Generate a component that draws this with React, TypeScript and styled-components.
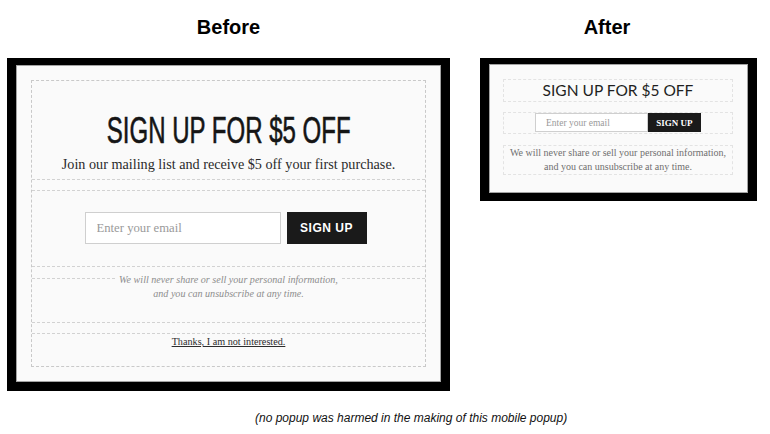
import React from "react";
import styled, { createGlobalStyle } from "styled-components";

const GlobalStyle = createGlobalStyle`
  html, body { margin: 0; padding: 0; background: #ffffff; }
  body { width: 770px; height: 434px; overflow: hidden; }
  * { box-sizing: border-box; }
`;

const Page = styled.div`
  padding: 15px 0 0 7px;
  font-family: "Liberation Sans", Arial, sans-serif;
`;

const Row = styled.div`
  display: flex;
  align-items: flex-start;
`;

const Column = styled.div<{ $width: number; $gap?: number }>`
  width: ${(p) => p.$width}px;
  margin-left: ${(p) => p.$gap ?? 0}px;
  display: flex;
  flex-direction: column;
`;

const Heading = styled.h2<{ $shift?: number }>`
  margin: 0 0 19px;
  padding-right: ${(p) => p.$shift ?? 0}px;
  font: 700 20px/24px "Liberation Sans", Arial, sans-serif;
  color: #000;
  text-align: center;
`;

const Frame = styled.div<{ $top: number; $bottom: number }>`
  background: #000;
  padding: ${(p) => p.$top}px 9px ${(p) => p.$bottom}px;
`;

const Panel = styled.div<{ $pad: string }>`
  background: #fafafa;
  border: 1px solid #a3a3a3;
  padding: ${(p) => p.$pad};
`;

/* ---------- Before ---------- */

const DashedBox = styled.div`
  border: 1px dashed #c9c9c9;
  display: flex;
  flex-direction: column;
`;

const Section = styled.div<{ $pad: string; $top?: boolean; $bottom?: boolean; $gap?: number }>`
  padding: ${(p) => p.$pad};
  margin-top: ${(p) => p.$gap ?? 0}px;
  border-top: ${(p) => (p.$top ? "1px dashed #d2d2d2" : "none")};
  border-bottom: ${(p) => (p.$bottom ? "1px dashed #d2d2d2" : "none")};
  text-align: center;
  font-size: 10px;
  line-height: 14px;
`;

const BigTitle = styled.h1`
  margin: 0;
  font: 400 36px/36px "Liberation Sans", Arial, sans-serif;
  color: #151515;
  white-space: nowrap;
  span {
    display: inline-block;
    transform: scaleX(0.667);
    transform-origin: center;
    -webkit-text-stroke: 0.6px #151515;
  }
`;

const Subtitle = styled.p`
  margin: 6px 0 0;
  font: 400 14.2px/18px "Liberation Serif", "Times New Roman", serif;
  color: #2a2a2a;
  white-space: nowrap;
`;

const FormRow = styled.div<{ $h: number; $gap: number }>`
  display: flex;
  justify-content: center;
  gap: ${(p) => p.$gap}px;
  height: ${(p) => p.$h}px;
`;

const EmailInput = styled.input<{ $w: number; $fs: number; $pl: number }>`
  width: ${(p) => p.$w}px;
  height: 100%;
  margin: 0;
  border: 1px solid #cfcfcf;
  background: #fff;
  padding: 0 0 0 ${(p) => p.$pl}px;
  font: 400 ${(p) => p.$fs}px "Liberation Serif", "Times New Roman", serif;
  color: #333;
  outline: none;
  &::placeholder { color: #9a9a9a; }
`;

const SignButton = styled.button<{ $w: number; $serif?: boolean }>`
  width: ${(p) => p.$w}px;
  height: 100%;
  margin: 0;
  border: none;
  background: #1a1a1a;
  color: #fff;
  padding: 0;
  cursor: pointer;
  font: ${(p) =>
    p.$serif
      ? `700 9px "Liberation Serif", "Times New Roman", serif`
      : `700 12px "Liberation Sans", Arial, sans-serif`};
  letter-spacing: ${(p) => (p.$serif ? "0" : "0.5px")};
`;

const Disclaimer = styled.p`
  display: block;
  width: fit-content;
  margin: -6px auto 0;
  padding: 0 2px;
  background: #fafafa;
  font: italic 400 10.1px/14px "Liberation Serif", "Times New Roman", serif;
  color: #8d8d8d;
  white-space: nowrap;
`;

const NoThanks = styled.a`
  font: 400 10.2px/14px "Liberation Serif", "Times New Roman", serif;
  color: #2d2d2d;
  text-decoration: underline;
  cursor: pointer;
`;

/* ---------- After ---------- */

const LightBox = styled.div<{ $h: number; $gap?: number }>`
  border: 1px dashed #e3e3e3;
  height: ${(p) => p.$h}px;
  margin-top: ${(p) => p.$gap ?? 0}px;
  text-align: center;
`;

const SmallTitle = styled.div`
  font: 400 15.5px/21px Lato, "Liberation Sans", sans-serif;
  color: #1f1f1f;
  white-space: nowrap;
`;

const SmallNote = styled.p`
  margin: 0;
  font: 400 10px/14px "Liberation Serif", "Times New Roman", serif;
  color: #6f6f6f;
  white-space: nowrap;
`;

const Caption = styled.p`
  margin: 19px 0 0 248px;
  font: italic 400 12px/16px "Liberation Sans", Arial, sans-serif;
  color: #111;
`;

export default function App() {
  return (
    <>
      <GlobalStyle />
      <Page>
        <Row>
          <Column $width={443}>
            <Heading>Before</Heading>
            <Frame $top={7} $bottom={9}>
              <Panel $pad="14px 14px 14px">
                <DashedBox>
                  <Section $pad="32px 0 6px" $bottom>
                    <BigTitle>
                      <span>SIGN UP FOR $5 OFF</span>
                    </BigTitle>
                    <Subtitle>Join our mailing list and receive $5 off your first purchase.</Subtitle>
                  </Section>
                  <Section $pad="21px 6px 22px 0" $top $bottom $gap={10}>
                    <FormRow $h={32} $gap={6}>
                      <EmailInput $w={196} $fs={12.7} $pl={11} type="email" placeholder="Enter your email" />
                      <SignButton $w={80}>SIGN UP</SignButton>
                    </FormRow>
                  </Section>
                  <Section $pad="0 0 21px" $top $bottom $gap={11}>
                    <Disclaimer>
                      We will never share or sell your personal information,
                      <br />
                      and you can unsubscribe at any time.
                    </Disclaimer>
                  </Section>
                  <Section $pad="1px 0 17px" $top $gap={10}>
                    <NoThanks>Thanks, I am not interested.</NoThanks>
                  </Section>
                </DashedBox>
              </Panel>
            </Frame>
          </Column>
          <Column $width={277} $gap={30}>
            <Heading $shift={23}>After</Heading>
            <Frame $top={6} $bottom={8}>
              <Panel $pad="14px 14px 17px 13px">
                <LightBox $h={23}>
                  <SmallTitle>SIGN UP FOR $5 OFF</SmallTitle>
                </LightBox>
                <LightBox $h={22} $gap={10}>
                  <FormRow $h={19} $gap={0}>
                    <EmailInput $w={113} $fs={9.5} $pl={10} type="email" placeholder="Enter your email" />
                    <SignButton $w={53} $serif>SIGN UP</SignButton>
                  </FormRow>
                </LightBox>
                <LightBox $h={30} $gap={11}>
                  <SmallNote>
                    We will never share or sell your personal information,
                    <br />
                    and you can unsubscribe at any time.
                  </SmallNote>
                </LightBox>
              </Panel>
            </Frame>
          </Column>
        </Row>
        <Caption>(no popup was harmed in the making of this mobile popup)</Caption>
      </Page>
    </>
  );
}
